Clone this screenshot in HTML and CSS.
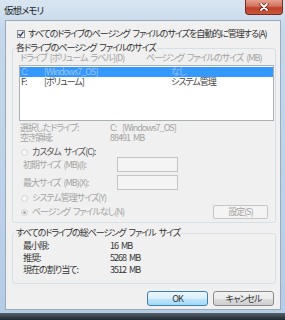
FILE: index.html
```html
<!DOCTYPE html>
<html lang="ja">
<head>
  <meta charset="UTF-8">
  <title>仮想メモリ</title>
  <link rel="stylesheet" href="styles.css">
</head>
<body>

  <div class="window">
    <!-- Title bar -->
    <div class="titlebar">
      <span class="title">仮想メモリ</span>
      <div class="close-btn">
        <svg width="10" height="8" viewBox="0 0 10 8">
          <path class="x-shadow" d="M2 1 L8 7 M8 1 L2 7" />
          <path class="x-mark" d="M2 1 L8 7 M8 1 L2 7" />
        </svg>
      </div>
    </div>

    <div class="client">
      <div class="check-row">
        <span class="checkbox">
          <svg width="6" height="6" viewBox="0 0 6 6"><path d="M0.5 3 L2.3 5 L5.5 0.6" /></svg>
        </span>
        <span>すべてのドライブのページング ファイルのサイズを自動的に管理する(A)</span>
      </div>

      <!-- Per drive -->
      <fieldset class="group">
        <legend>各ドライブのページング ファイルのサイズ</legend>
        <div class="list-header disabled">
          <span>ドライブ [ボリューム ラベル](D)</span>
          <span>ページング ファイルのサイズ (MB)</span>
        </div>
        <div class="drive-list">
          <div class="drive-row selected"><span>C:</span><span>[Windows7_OS]</span><span>なし</span></div>
          <div class="drive-row"><span>F:</span><span>[ボリューム]</span><span>システム管理</span></div>
        </div>

        <div class="info-grid disabled">
          <span>選択したドライブ:</span><span class="pre">C:  [Windows7_OS]</span>
          <span>空き領域:</span><span>88491 MB</span>
        </div>

        <div class="radio-row custom">
          <span class="radio"></span><span>カスタム サイズ(C):</span>
        </div>
        <div class="size-row disabled">
          <span>初期サイズ (MB)(I):</span><span class="input"></span>
        </div>
        <div class="size-row second disabled">
          <span>最大サイズ (MB)(X):</span><span class="input"></span>
        </div>
        <div class="radio-row system disabled">
          <span class="radio"></span><span>システム管理サイズ(Y)</span>
        </div>
        <div class="none-row disabled">
          <div class="radio-line">
            <span class="radio checked"></span><span>ページング ファイルなし(N)</span>
          </div>
          <div class="set-btn">設定(S)</div>
        </div>
      </fieldset>

      <!-- Totals -->
      <fieldset class="group totals">
        <legend>すべてのドライブの総ページング ファイル サイズ</legend>
        <div class="totals-grid">
          <span>最小限:</span><span>16 MB</span>
          <span>推奨:</span><span>5268 MB</span>
          <span>現在の割り当て:</span><span>3512 MB</span>
        </div>
      </fieldset>

      <div class="buttons">
        <div class="btn default">OK</div>
        <div class="btn">キャンセル</div>
      </div>
    </div>
  </div>

  <div class="taskbar"></div>

</body>
</html>
```

FILE: styles.css
```css
body {
  margin: 0;
  width: 285px;
  height: 320px;
  overflow: hidden;
  font-family: "Noto Sans CJK JP", sans-serif;
  font-feature-settings: "palt";
  font-size: 9px;
  line-height: 10px;
  letter-spacing: -1px;
  word-spacing: 2px;
  color: #333;
  background: #2c3a48;
}

/* Window frame */
.window {
  height: 313px;
  box-sizing: border-box;
  padding: 0 4px 3px 5px;
  display: flex;
  flex-direction: column;
  background: linear-gradient(to bottom, #d9e5f1 0%, #c4d7eb 10%, #bcd2ea 60%, #b4cce6 100%);
}

.titlebar {
  height: 20px;
  display: flex;
  justify-content: space-between;
  align-items: flex-start;
}

.title {
  margin: 5px 0 0 -1px;
  font-size: 9.5px;
  color: #1e1e1e;
}

.close-btn {
  width: 38px;
  height: 15px;
  margin-right: -2px;
  box-sizing: border-box;
  border: 1px solid #7a2a1e;
  border-top: none;
  border-radius: 0 0 4px 4px;
  background: linear-gradient(to bottom, #e6a08e 0%, #d2705c 45%, #c0412a 55%, #c8563c 100%);
  display: flex;
  justify-content: center;
  align-items: center;
}

.close-btn path {
  fill: none;
  stroke-linecap: round;
}

.x-shadow {
  stroke: #5a1a10;
  stroke-width: 3.2;
}

.x-mark {
  stroke: #ffffff;
  stroke-width: 1.8;
}

/* Client area */
.client {
  flex: 1;
  background: #f0f0f0;
  border: 1px solid #9aabbd;
  padding: 8px 0 3px 0;
  display: flex;
  flex-direction: column;
}

.disabled {
  color: #a3a3a3;
}

.check-row {
  height: 10px;
  padding-left: 11px;
  display: flex;
  align-items: center;
  gap: 3px;
}

.checkbox {
  width: 8px;
  height: 8px;
  box-sizing: border-box;
  border: 1px solid #8e8f8f;
  background: linear-gradient(to bottom, #ebebeb, #fafafa);
  display: flex;
  justify-content: center;
  align-items: center;
}

.checkbox path {
  fill: none;
  stroke: #2a3b6a;
  stroke-width: 1.3;
}

/* Group boxes */
.group {
  margin: 4px 4px 0 6px;
  padding: 0 1px 3px 6px;
  border: 1px solid #d5dfe5;
  border-radius: 3px;
  min-width: 0;
}

.group legend {
  padding: 0 1px;
  margin-left: -4px;
  line-height: 10px;
}

.list-header {
  line-height: 9px;
  padding-left: 1px;
  display: grid;
  grid-template-columns: 126px 1fr;
  white-space: nowrap;
}

.drive-list {
  margin-top: 3px;
  height: 56px;
  box-sizing: border-box;
  border: 1px solid #a9b0b8;
  background: #ffffff;
  padding-top: 1px;
}

.drive-row {
  height: 10px;
  line-height: 10px;
  padding-left: 1px;
  display: grid;
  grid-template-columns: 23px 127px 1fr;
  color: #444;
}

.drive-row.selected {
  background: #3399ff;
  color: #9cc3ef;
}

.info-grid {
  margin-top: 2px;
  padding-left: 1px;
  display: grid;
  grid-template-columns: 90px 1fr;
}

.pre {
  white-space: pre;
}

.radio-row {
  height: 10px;
  padding-left: 2px;
  display: flex;
  align-items: center;
  gap: 4px;
}

.radio-row.custom {
  margin-top: 4px;
  color: #555;
}

.radio-row.system {
  margin-top: 3px;
}

.radio {
  width: 7px;
  height: 7px;
  box-sizing: border-box;
  border: 1px solid #d2d2d2;
  border-radius: 50%;
  background: #f6f6f6;
  display: flex;
  justify-content: center;
  align-items: center;
}

.radio.checked::after {
  content: "";
  width: 3px;
  height: 3px;
  border-radius: 50%;
  background: #a8a8a8;
}

.size-row {
  height: 15px;
  padding-left: 4px;
  display: grid;
  grid-template-columns: 94px 61px;
  align-items: center;
}

.size-row.second {
  margin-top: 3px;
}

.input {
  height: 15px;
  box-sizing: border-box;
  border: 1px solid #c4c4c4;
  background: #f4f4f4;
}

.none-row {
  margin: 2px 6px 0 0;
  height: 14px;
  display: flex;
  justify-content: space-between;
  align-items: center;
}

.radio-line {
  padding-left: 2px;
  display: flex;
  align-items: center;
  gap: 4px;
}

.set-btn {
  width: 55px;
  height: 14px;
  box-sizing: border-box;
  border: 1px solid #c5c5c5;
  border-radius: 2px;
  background: #f4f4f4;
  display: flex;
  justify-content: center;
  align-items: center;
}

/* Totals */
.group.totals {
  margin-top: 5px;
  padding-bottom: 7px;
}

.totals-grid {
  padding: 2px 0 0 4px;
  line-height: 12px;
  display: grid;
  grid-template-columns: 87px 1fr;
}

/* Dialog buttons */
.buttons {
  margin: 7px 6px 0 0;
  display: flex;
  justify-content: flex-end;
  gap: 5px;
}

.btn {
  width: 61px;
  height: 15px;
  box-sizing: border-box;
  border: 1px solid #8a8a8a;
  border-radius: 3px;
  background: linear-gradient(to bottom, #f2f2f2 0%, #ebebeb 50%, #dddddd 51%, #cfcfcf 100%);
  display: flex;
  justify-content: center;
  align-items: center;
  color: #333;
}

.btn.default {
  border-color: #3c7fb1;
  background: linear-gradient(to bottom, #eaf6fd 0%, #d9f0fc 50%, #bee6fd 51%, #a7d9f5 100%);
}

.taskbar {
  height: 7px;
  background: linear-gradient(to bottom, #56606a, #1f2830);
}
```
